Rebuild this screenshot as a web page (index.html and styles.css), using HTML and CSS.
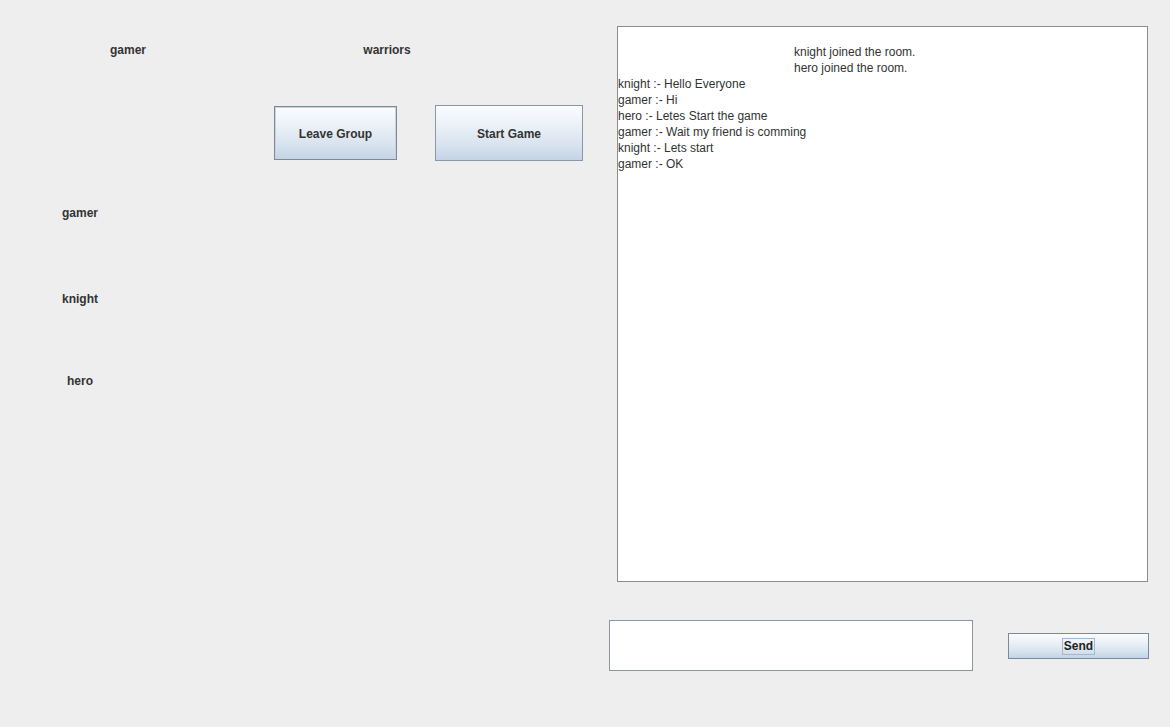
FILE: index.html
```html
<!DOCTYPE html>
<html lang="en">
<head>
<meta charset="utf-8">
<title>Game Room</title>
<link rel="stylesheet" href="styles.css">
</head>
<body>
<main class="room">
  <section class="lobby">
    <div class="head-row">
      <span class="label user-name">gamer</span>
      <span class="label group-name">warriors</span>
    </div>
    <div class="action-row">
      <button class="btn btn-leave" type="button">Leave Group</button>
      <button class="btn btn-start" type="button">Start Game</button>
    </div>
    <ul class="players">
      <li class="label player p1">gamer</li>
      <li class="label player p2">knight</li>
      <li class="label player p3">hero</li>
    </ul>
  </section>

  <section class="chat">
    <div class="chat-log">
      <p class="notice">knight joined the room.</p>
      <p class="notice">hero joined the room.</p>
      <p>knight :- Hello Everyone</p>
      <p>gamer :- Hi</p>
      <p>hero :- Letes Start the game</p>
      <p>gamer :- Wait my friend is comming</p>
      <p>knight :- Lets start</p>
      <p>gamer :- OK</p>
    </div>
    <div class="compose">
      <textarea class="message" aria-label="Message"></textarea>
      <button class="btn btn-send" type="button"><span class="focus">Send</span></button>
    </div>
  </section>
</main>
</body>
</html>
```

FILE: styles.css
```css
html, body {
  margin: 0;
  padding: 0;
  background: #eeeeee;
}

body {
  width: 1170px;
  height: 727px;
  overflow: hidden;
  font-family: "Liberation Sans", Arial, sans-serif;
  font-size: 12px;
  color: #333333;
}

.room {
  display: flex;
  align-items: flex-start;
}

/* left side: names, actions, players */
.lobby {
  width: 609px;
  flex: none;
}

.label {
  display: block;
  font-weight: bold;
  line-height: 16px;
  height: 16px;
  text-align: center;
  color: #333333;
}

.head-row {
  display: flex;
  padding-top: 42px;
}

.user-name {
  width: 100px;
  margin-left: 78px;
}

.group-name {
  width: 100px;
  margin-left: 159px;
}

.action-row {
  display: flex;
  align-items: flex-start;
  margin-top: 47px;
  height: 56px;
}

.btn {
  font-family: "Liberation Sans", Arial, sans-serif;
  font-size: 12px;
  font-weight: bold;
  color: #333333;
  border: 1px solid #7a8a99;
  background: linear-gradient(to bottom, #fbfcfe 0%, #eef3f8 30%, #d9e4ef 70%, #c3d4e5 100%);
  padding: 2px 0 0;
  margin: 0;
  cursor: pointer;
}

.btn-leave {
  margin-left: 274px;
  margin-top: 1px;
  width: 123px;
  height: 54px;
  box-shadow: inset 0 0 0 1px #c7d3df;
}

.btn-start {
  margin-left: 38px;
  width: 148px;
  height: 56px;
  border-color: #8a98a6;
}

.players {
  list-style: none;
  margin: 44px 0 0;
  padding: 0;
}

.player {
  width: 100px;
  margin-left: 30px;
}

.p2 { margin-top: 70px; }
.p3 { margin-top: 66px; }

/* right side: conversation and composer */
.chat {
  width: 561px;
  flex: none;
}

.chat-log {
  box-sizing: border-box;
  width: 531px;
  height: 556px;
  margin: 26px 0 0 8px;
  padding: 17px 0 0 0;
  background: #ffffff;
  border: 1px solid #8c8c8c;
  font-size: 12px;
  line-height: 16px;
  color: #333333;
}

.chat-log p {
  margin: 0;
  white-space: nowrap;
}

.chat-log .notice {
  padding-left: 176px;
}

.compose {
  display: flex;
  align-items: flex-start;
  margin-top: 38px;
}

.message {
  box-sizing: border-box;
  width: 364px;
  height: 51px;
  margin: 0;
  background: #ffffff;
  border: 1px solid #8c95a0;
  resize: none;
  outline: none;
}

.btn-send {
  width: 141px;
  height: 26px;
  margin-left: 35px;
  margin-top: 13px;
  padding: 0;
  display: flex;
  align-items: center;
  justify-content: center;
}

.focus {
  display: inline-block;
  padding: 0 1px;
  line-height: 15px;
  border: 1px solid #a3b8cc;
  color: #222222;
}
```
